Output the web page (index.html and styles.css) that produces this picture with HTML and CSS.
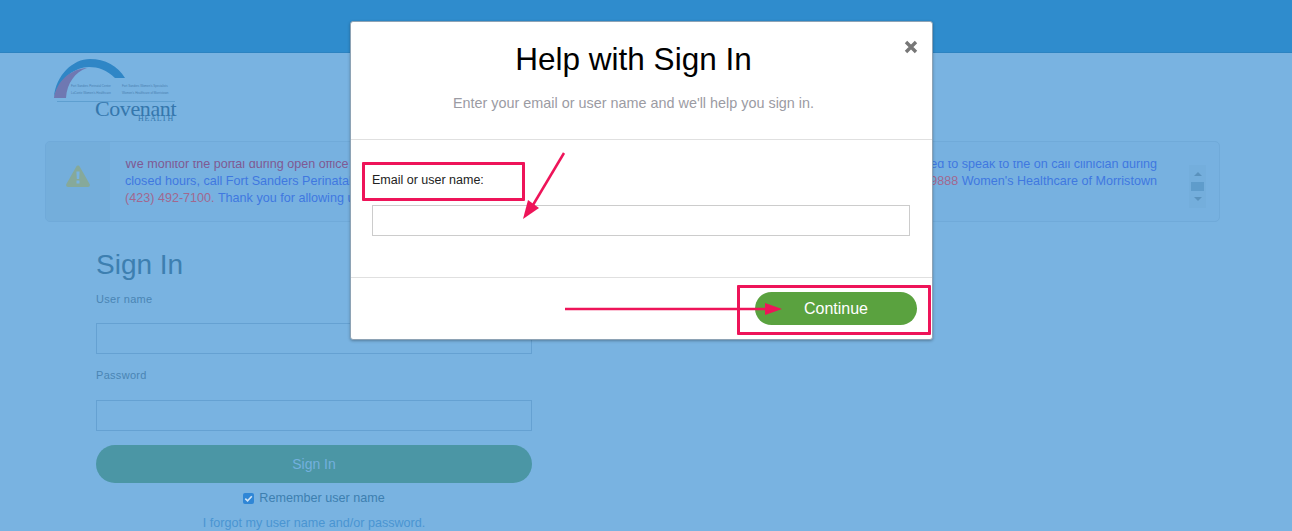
FILE: index.html
```html
<!DOCTYPE html>
<html lang="en">
<head>
<meta charset="utf-8">
<title>Help with Sign In</title>
<link rel="stylesheet" href="styles.css">
</head>
<body>
<header class="topbar"></header>
<main class="page">
  <div class="logo">
    <svg class="logo-arc" width="140" height="60" viewBox="0 0 140 60" aria-hidden="true">
      <path d="M9 44C11 22 28 6 45 6C60 6 73 13 80 25L70 25C62 17 53 14 44 14C30 14 15 25 9 44Z" fill="#2f86c6"/>
      <path d="M9 45C11 30 24 16 42 15C30 19 22 30 21 45Z" fill="#6f78b2"/>
      <path d="M12 48.500H130" stroke="#5e9fd0" stroke-width="1"/>
    </svg>
    <div class="logo-small logo-small-a">Fort Sanders Perinatal Center<br>LaConte Women's Healthcare</div>
    <div class="logo-small logo-small-b">Fort Sanders Women's Specialists<br>Women's Healthcare of Morristown</div>
    <div class="logo-brand">Covenant</div>
    <div class="logo-health">HEALTH</div>
  </div>

  <section class="alert">
    <div class="alert-icon">
      <svg width="24" height="22" viewBox="0 0 24 22" aria-hidden="true">
        <path d="M12 0.5C12.8 0.5 13.4 1 13.8 1.7L23.6 19C24.3 20.3 23.500 22 22 22H2C0.5 22 -0.3 20.3 0.4 19L10.2 1.7C10.6 1 11.2 0.5 12 0.5Z" fill="#86a99a"/>
        <path d="M10.4 6.5H13.6L13.2 14H10.800Z M10.5 15.6H13.5V18.6H10.5Z" fill="#78b3e1"/>
      </svg>
    </div>
    <div class="alert-body">
      <div class="alert-line"><span class="red">We monitor the portal during open office hours.</span><span>If you need to speak to the on call clinician during</span></div>
      <div class="alert-line"><span>closed hours, call Fort Sanders Perinatal Center</span><span><span class="red">(865) 331-9888</span> Women's Healthcare of Morristown</span></div>
      <div class="alert-line"><span><span class="red">(423) 492-7100.</span> Thank you for allowing us to care for you.</span></div>
    </div>
    <div class="scroll">
      <span class="tri-up"></span>
      <span class="thumb"></span>
      <span class="tri-down"></span>
    </div>
  </section>

  <form class="signin">
    <h1>Sign In</h1>
    <label class="field-label" for="user">User name</label>
    <input class="field" id="user" type="text">
    <label class="field-label pw" for="pw">Password</label>
    <input class="field field-pw" id="pw" type="password">
    <button class="signin-btn" type="button">Sign In</button>
    <div class="remember"><span class="check"><svg width="11" height="11" viewBox="0 0 12 12" aria-hidden="true"><path d="M2.5 6.200L5 8.600L9.600 3.600" fill="none" stroke="#cfe3f5" stroke-width="1.800"/></svg></span>Remember user name</div>
    <a class="forgot" href="#">I forgot my user name and/or password.</a>
  </form>
</main>

<div class="modal">
  <div class="modal-head">
    <svg class="close" width="14" height="14" viewBox="0 0 14 14" aria-hidden="true"><path d="M2 2L12 12M12 2L2 12" stroke="#777" stroke-width="3.400" fill="none"/></svg>
    <h2>Help with Sign In</h2>
    <p>Enter your email or user name and we'll help you sign in.</p>
  </div>
  <div class="modal-body">
    <label for="email">Email or user name:</label>
    <input id="email" type="text">
  </div>
  <div class="modal-foot">
    <button type="button">Continue</button>
  </div>
  <span class="mark mark-label"></span>
  <span class="mark mark-btn"></span>
  <svg class="arrows" width="583" height="319" viewBox="0 0 583 319" aria-hidden="true">
    <path d="M213 131L182 183" stroke="#ee1459" stroke-width="2.500" fill="none"/>
    <path d="M172 197L177 178L188 186Z" fill="#ee1459"/>
    <path d="M214 287H416" stroke="#ee1459" stroke-width="2.500" fill="none"/>
    <path d="M431 287L414 281V293Z" fill="#ee1459"/>
  </svg>
</div>
</body>
</html>
```
FILE: styles.css
```css
* { box-sizing: border-box; }
html, body { margin: 0; height: 531px; overflow: hidden; }
body {
  position: relative;
  background: #79b3e1;
  font-family: "Liberation Sans", Arial, sans-serif;
  color: #3d7fb0;
}
.topbar {
  height: 53px;
  background: #2f8ccd;
  border-bottom: 1px solid #2c83c1;
}
.page { padding: 0 72px 0 45px; }

.logo { position: relative; height: 88px; width: 140px; }
.logo-arc { position: absolute; left: 0; top: 0; }
.logo-small {
  position: absolute;
  top: 30px;
  font-size: 3px;
  line-height: 7px;
  white-space: nowrap;
  color: #4a7fb0;
}
.logo-small-a { left: 26px; }
.logo-small-b { left: 77px; }
.logo-brand {
  position: absolute;
  left: 50px;
  top: 45px;
  font-family: "Liberation Serif", serif;
  font-size: 22px;
  line-height: 22px;
  letter-spacing: -0.4px;
  color: #3577ad;
}
.logo-health {
  position: absolute;
  left: 93px;
  top: 62px;
  font-family: "Liberation Serif", serif;
  font-size: 8px;
  line-height: 8px;
  letter-spacing: 0.8px;
  color: #3577ad;
}

.alert {
  display: flex;
  width: 1175px;
  height: 81px;
  border: 1px solid #70aad9;
  border-radius: 5px;
  background: #77b1e0;
  overflow: hidden;
}
.alert-icon {
  flex: 0 0 64px;
  display: flex;
  justify-content: center;
  padding-top: 23px;
  background: #74aedb;
}
.alert-body {
  flex: 1;
  min-width: 0;
  height: 60px;
  margin: 19px 32px 0 15px;
  overflow: hidden;
}
.alert-line {
  display: flex;
  justify-content: space-between;
  font-size: 12.600px;
  line-height: 17px;
  white-space: nowrap;
  color: #3f78e0;
}
.alert-line:first-child { margin-top: -5px; }
.alert-line:first-child .red { color: #7f5a93; }
.red { color: #a2688f; }
.scroll {
  flex: 0 0 17px;
  height: 43px;
  margin: 23px 13px 0 0;
  display: flex;
  flex-direction: column;
  align-items: center;
  gap: 6px;
  padding-top: 7px;
  background: #74aedc;
}
.tri-up, .tri-down {
  width: 0;
  height: 0;
  border-left: 4px solid transparent;
  border-right: 4px solid transparent;
}
.tri-up { border-bottom: 4px solid #5a92bd; }
.tri-down { border-top: 4px solid #5a92bd; }
.thumb { width: 13px; height: 9px; background: #5f9ccb; }

.signin {
  width: 436px;
  margin: 27px 0 0 51px;
  display: flex;
  flex-direction: column;
}
.signin h1 {
  margin: 0;
  font-size: 28px;
  font-weight: 400;
  line-height: 32px;
  color: #3d7fb0;
}
.field-label {
  margin-top: 11px;
  font-size: 11px;
  line-height: 14px;
  letter-spacing: 0.3px;
  color: #4a85b4;
}
.field-label.pw { margin-top: 14px; }
.field {
  display: block;
  height: 31px;
  margin-top: 17px;
  background: transparent;
  border: 1px solid #65a1d2;
  outline: none;
}
.field-pw { margin-top: 18px; }
.signin-btn {
  height: 38px;
  margin-top: 14px;
  border: 0;
  border-radius: 19px;
  background: #4b96a5;
  color: #73b0de;
  font: 14px "Liberation Sans", Arial, sans-serif;
}
.remember {
  display: flex;
  justify-content: center;
  align-items: center;
  gap: 5px;
  margin-top: 7px;
  height: 16px;
  font-size: 12.600px;
  color: #3d7fb0;
}
.check {
  display: flex;
  width: 11px;
  height: 11px;
  border-radius: 2px;
  background: #2f86d6;
  align-items: center;
  justify-content: center;
}
.forgot {
  margin-top: 9px;
  text-align: center;
  font-size: 12.600px;
  line-height: 16px;
  color: #4a95d2;
  text-decoration: none;
}

.modal {
  position: absolute;
  left: 350px;
  top: 21px;
  width: 583px;
  height: 319px;
  display: flex;
  flex-direction: column;
  background: #fff;
  border: 1px solid #8ea3b5;
  border-radius: 3px;
  box-shadow: 0 1px 3px rgba(0, 0, 0, 0.3);
}
.modal-head {
  position: relative;
  height: 118px;
  flex: none;
  padding-right: 16px;
  border-bottom: 1px solid #e0e0e0;
  text-align: center;
}
.modal-head h2 {
  margin: 0;
  padding-top: 18px;
  font-size: 31.500px;
  font-weight: 400;
  line-height: 38px;
  color: #000;
}
.modal-head p {
  margin: 15px 0 0;
  font-size: 14.400px;
  line-height: 20px;
  color: #9b9ba3;
}
.close {
  position: absolute;
  right: 14px;
  top: 18px;
}
.modal-body {
  flex: 1;
  padding: 33px 21px 0;
  border-bottom: 1px solid #e0e0e0;
}
.modal-body label {
  display: block;
  font-size: 12.500px;
  line-height: 14px;
  color: #222;
}
.modal-body input {
  display: block;
  width: 538px;
  height: 31px;
  margin-top: 18px;
  border: 1px solid #ccc;
  outline: none;
}
.modal-foot {
  display: flex;
  justify-content: flex-end;
  height: 61px;
  padding: 14px 15px 0 0;
  flex: none;
}
.modal-foot button {
  width: 162px;
  height: 33px;
  border: 0;
  border-radius: 17px;
  background: #5aa23f;
  color: #fff;
  font: 16px "Liberation Sans", Arial, sans-serif;
}
.mark {
  position: absolute;
  border: 3px solid #ee1459;
  border-radius: 1px;
  pointer-events: none;
}
.mark-label { left: 11px; top: 140px; width: 163px; height: 39px; }
.mark-btn { left: 386px; top: 263px; width: 194px; height: 50px; }
.arrows { position: absolute; left: 0; top: 0; pointer-events: none; }
```
